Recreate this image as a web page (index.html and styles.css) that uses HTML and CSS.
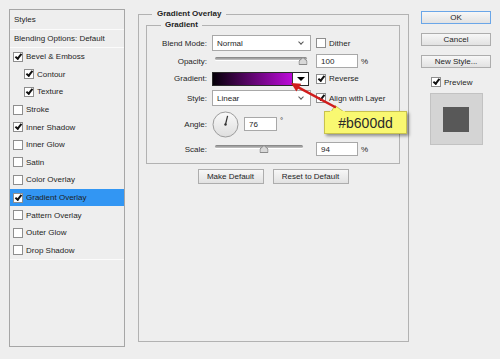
FILE: index.html
```html
<!DOCTYPE html>
<html lang="en">
<head>
  <meta charset="UTF-8">
  <title>Layer Style</title>
  <link rel="stylesheet" href="styles.css">
</head>
<body>
  <div class="dialog">
    <div class="styles">
      <div class="srow title">Styles</div>
      <div class="srow blend">Blending Options: Default</div>
      <ul class="fx">
        <li><span class="cb on"></span>Bevel &amp; Emboss</li>
        <li class="sub"><span class="cb on"></span>Contour</li>
        <li class="sub"><span class="cb on"></span>Texture</li>
        <li><span class="cb"></span>Stroke</li>
        <li><span class="cb on"></span>Inner Shadow</li>
        <li><span class="cb"></span>Inner Glow</li>
        <li><span class="cb"></span>Satin</li>
        <li><span class="cb"></span>Color Overlay</li>
        <li class="sel"><span class="cb on"></span>Gradient Overlay</li>
        <li><span class="cb"></span>Pattern Overlay</li>
        <li><span class="cb"></span>Outer Glow</li>
        <li><span class="cb"></span>Drop Shadow</li>
      </ul>
    </div>

    <fieldset class="group">
      <legend>Gradient Overlay</legend>
      <fieldset class="inner">
        <legend>Gradient</legend>
        <div class="form">
          <span class="lbl">Blend Mode:</span>
          <div class="select">Normal</div>
          <div class="check"><span class="cb"></span>Dither</div>

          <span class="lbl">Opacity:</span>
          <div class="slider">
            <div class="track"></div>
            <svg class="thumb" style="left: 95.6%" width="9" height="8" viewBox="0 0 9 8"><polygon points="4.5,0.5 8.5,4 8.5,7.5 0.5,7.5 0.5,4" fill="#d8d8d8" stroke="#8a8a8a"/></svg>
          </div>
          <div class="value"><span class="num">100</span><span class="unit">%</span></div>

          <span class="lbl">Gradient:</span>
          <div class="grad"><div class="ramp"></div><div class="drop"><span class="tri"></span></div></div>
          <div class="check"><span class="cb on"></span>Reverse</div>

          <span class="lbl">Style:</span>
          <div class="select">Linear</div>
          <div class="check"><span class="cb on"></span>Align with Layer</div>

          <span class="lbl">Angle:</span>
          <div class="angle">
            <svg class="dial" width="27" height="27" viewBox="0 0 27 27">
              <defs>
                <linearGradient id="dialfill" x1="0" y1="0" x2="0" y2="1">
                  <stop offset="0" stop-color="#fafafa"/>
                  <stop offset="1" stop-color="#dedede"/>
                </linearGradient>
              </defs>
              <circle cx="13.5" cy="13.5" r="12.5" fill="url(#dialfill)" stroke="#9c9c9c"/>
              <line x1="13.5" y1="13.5" x2="15.6" y2="4.8" stroke="#333" stroke-width="1.2"/>
              <circle cx="13.5" cy="13.5" r="1.2" fill="#333"/>
            </svg>
            <span class="num small">76</span><span class="deg">°</span>
          </div>
          <span></span>

          <span class="lbl">Scale:</span>
          <div class="slider short">
            <div class="track"></div>
            <svg class="thumb" style="left: 55.7%" width="9" height="8" viewBox="0 0 9 8"><polygon points="4.5,0.5 8.5,4 8.5,7.5 0.5,7.5 0.5,4" fill="#d8d8d8" stroke="#8a8a8a"/></svg>
          </div>
          <div class="value"><span class="num">94</span><span class="unit">%</span></div>
        </div>
      </fieldset>
      <div class="defaults">
        <button class="btn make">Make Default</button>
        <button class="btn reset">Reset to Default</button>
      </div>
    </fieldset>

    <div class="actions">
      <button class="btn ok">OK</button>
      <button class="btn">Cancel</button>
      <button class="btn">New Style...</button>
      <div class="check preview"><span class="cb on"></span>Preview</div>
      <div class="swatch"><div class="square"></div></div>
    </div>
  </div>

  <div class="callout">#b600dd</div>
  <svg class="arrow" width="62" height="40" viewBox="0 0 62 40">
    <polygon points="46,36 50,29.5 59,36" fill="#f9f871" stroke="#c8c24e"/>
    <rect x="45" y="35" width="15" height="3" fill="#f9f871"/>
    <line x1="50" y1="31" x2="13.8" y2="11.6" stroke="#d01c1c" stroke-width="2.4" stroke-linecap="round"/>
    <polygon points="6,7 16.2,7.8 11.4,15.6" fill="#d01c1c"/>
  </svg>
</body>
</html>
```

FILE: styles.css
```css
body {
  margin: 0;
  padding: 9px;
  width: 500px;
  height: 359px;
  box-sizing: border-box;
  overflow: hidden;
  position: relative;
  background-color: #EEEEEE;
  font-family: 'Liberation Sans', Arial, sans-serif;
  font-size: 8px;
  color: #1E1E1E;
}

.dialog {
  display: flex;
  align-items: flex-start;
}

/* Styles list on the left */
.styles {
  width: 116px;
  height: 338px;
  border: 1px solid #A6A6A6;
  box-sizing: border-box;
  flex: none;
}

.srow {
  display: flex;
  align-items: center;
  padding-left: 4px;
  border-bottom: 1px solid #FBFBFB;
}

.srow.title {
  height: 19px;
}

.srow.blend {
  height: 17px;
}

.fx {
  list-style: none;
  margin: 0;
  padding: 0;
  border-bottom: 1px solid #FBFBFB;
}

.fx li {
  height: 17.6px;
  display: flex;
  align-items: center;
  gap: 3px;
  padding-left: 3px;
}

.fx li.sub {
  padding-left: 14px;
}

.fx li.sel {
  background-color: #3296F3;
}

/* Checkbox */
.cb {
  position: relative;
  flex: none;
  width: 10px;
  height: 10px;
  box-sizing: border-box;
  border: 1px solid #8E8E8E;
  background-color: #FFFFFF;
}

.cb.on::after {
  content: '';
  position: absolute;
  left: 1px;
  top: 1px;
  width: 5px;
  height: 2px;
  border-left: 2px solid #111111;
  border-bottom: 2px solid #111111;
  transform: rotate(-52deg);
}

.check {
  display: flex;
  align-items: center;
  gap: 3px;
}

/* Fieldsets */
.group {
  width: 271px;
  height: 333px;
  box-sizing: border-box;
  margin: 0 0 0 13px;
  padding: 1px 8px 0 7px;
  min-width: 0;
  border: 1px solid #B2B2B2;
  flex: none;
}

.group legend {
  font-weight: bold;
  line-height: 10px;
  padding: 0 5px;
  margin-left: 6px;
}

.inner {
  margin: 0;
  padding: 5px 0 3px 0;
  min-width: 0;
  border: 1px solid #B2B2B2;
}

.inner legend {
  font-weight: bold;
  line-height: 10px;
  padding: 0 4px;
  margin-left: 14px;
}

.form {
  display: grid;
  grid-template-columns: 60px 99px 1fr;
  grid-template-rows: 16px 20px 15px 24px 28px 22px;
  column-gap: 5px;
  align-items: center;
}

.lbl {
  text-align: right;
}

.select {
  position: relative;
  height: 16px;
  box-sizing: border-box;
  border: 1px solid #A8A8A8;
  background-color: #FFFFFF;
  display: flex;
  align-items: center;
  padding-left: 4px;
}

.select::after {
  content: '';
  position: absolute;
  right: 7px;
  top: 4px;
  width: 3px;
  height: 3px;
  border-right: 1px solid #555555;
  border-bottom: 1px solid #555555;
  transform: rotate(45deg);
}

/* Sliders */
.slider {
  position: relative;
  height: 12px;
  margin: 0 4px 0 3px;
}

.slider.short {
  margin-right: 8px;
}

.track {
  position: absolute;
  left: 0;
  right: 0;
  top: 2px;
  height: 3px;
  border-radius: 2px;
  background: linear-gradient(#7E7E7E, #C6C6C6);
  box-shadow: 0 1px 0 #FFFFFF;
}

.thumb {
  position: absolute;
  top: 2px;
  transform: translateX(-50%);
}

.value {
  display: flex;
  align-items: center;
}

.num {
  width: 42px;
  height: 14px;
  box-sizing: border-box;
  border: 1px solid #A8A8A8;
  background-color: #FFFFFF;
  padding-left: 4px;
  display: flex;
  align-items: center;
}

.num.small {
  width: 33px;
  margin-left: 5px;
}

.unit {
  margin-left: 3px;
}

.deg {
  margin-left: 3px;
  align-self: flex-start;
  margin-top: 5px;
}

/* Gradient picker */
.grad {
  display: flex;
  height: 14px;
  box-sizing: border-box;
  border: 1px solid #2A2A2A;
  margin-right: 2px;
}

.ramp {
  flex: 1;
  background: linear-gradient(to right, #050008, #BC0AD9);
  border-right: 1px solid #333333;
}

.drop {
  width: 15px;
  background-color: #FFFFFF;
  display: flex;
  align-items: center;
  justify-content: center;
}

.tri {
  width: 0;
  height: 0;
  border-left: 4px solid transparent;
  border-right: 4px solid transparent;
  border-top: 4px solid #000000;
}

.angle {
  display: flex;
  align-items: center;
}

.dial {
  flex: none;
}

/* Buttons */
.btn {
  display: block;
  height: 13px;
  padding: 0;
  box-sizing: border-box;
  border: 1px solid #ADADAD;
  background: linear-gradient(#F7F7F7, #E2E2E2);
  font-family: inherit;
  font-size: 8px;
  color: #1E1E1E;
}

.defaults {
  display: flex;
  justify-content: center;
  gap: 9px;
  margin-top: 5px;
}

.defaults .btn {
  height: 15px;
}

.make {
  width: 66px;
}

.reset {
  width: 76px;
}

.actions {
  width: 70px;
  margin: 2px 0 0 12px;
  display: flex;
  flex-direction: column;
  flex: none;
}

.actions .btn {
  width: 70px;
  margin-bottom: 9px;
}

.btn.ok {
  border-color: #6AA6E8;
}

.preview {
  height: 10px;
  padding-left: 10px;
}

.swatch {
  align-self: center;
  width: 53px;
  height: 52px;
  box-sizing: border-box;
  margin-top: 6px;
  border: 1px solid #C2C2C2;
  background-color: #D4D4D4;
  display: flex;
  align-items: center;
  justify-content: center;
}

.square {
  width: 26px;
  height: 25px;
  background-color: #585858;
}

/* Annotation */
.callout {
  position: absolute;
  left: 324px;
  top: 111px;
  width: 83px;
  height: 23px;
  box-sizing: border-box;
  border: 1px solid #C8C24E;
  background-color: #F9F871;
  box-shadow: 2px 2px 3px rgba(0, 0, 0, 0.4);
  display: flex;
  align-items: center;
  justify-content: center;
  font-size: 14px;
  color: #2A2A2A;
}

.arrow {
  position: absolute;
  left: 285px;
  top: 76px;
}
```
